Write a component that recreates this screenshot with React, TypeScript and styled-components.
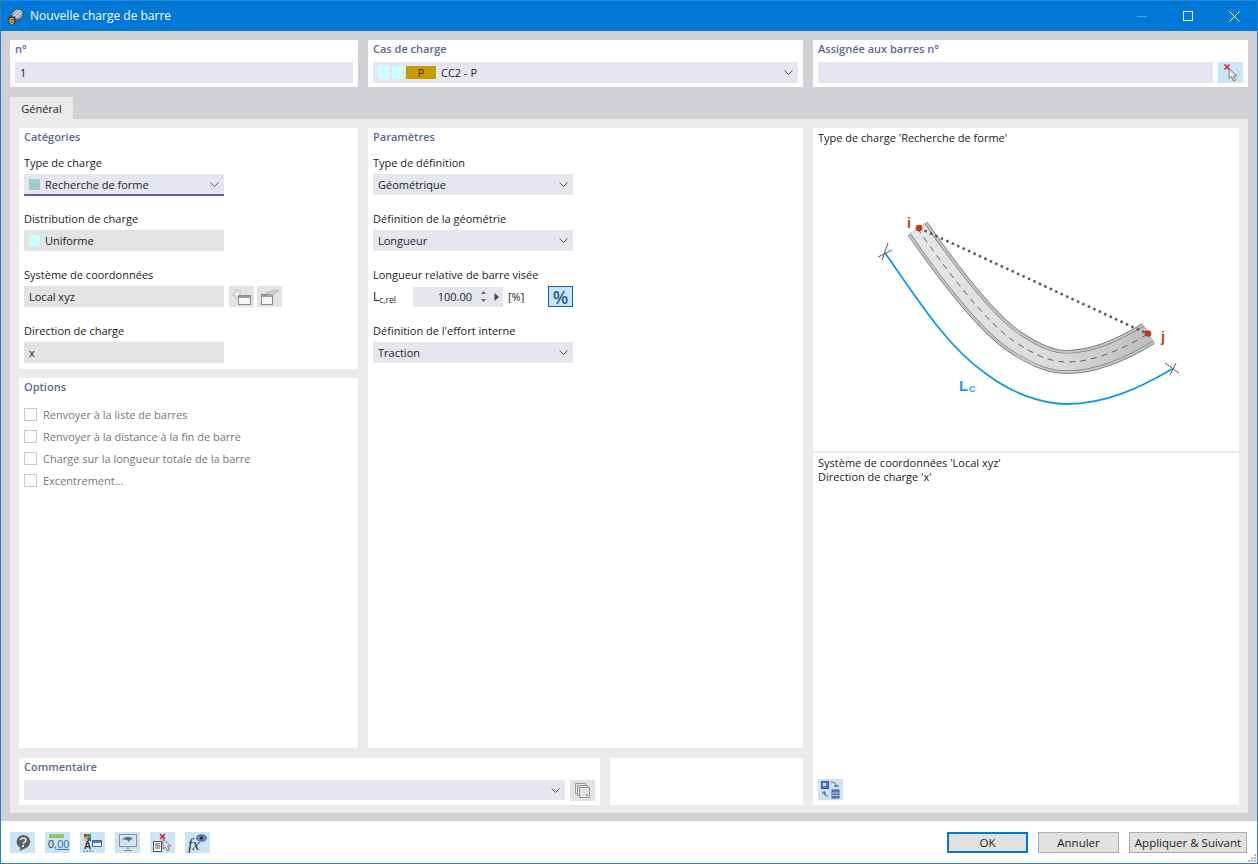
import React from "react";
import styled, { createGlobalStyle } from "styled-components";

const Global = createGlobalStyle`
  html, body { margin: 0; padding: 0; background: #fff; }
  * { box-sizing: border-box; }
  body { font-family: "Open Sans", "Noto Sans", "Liberation Sans", sans-serif; font-size: 11px; color: #1c1c1c; }
`;

const Win = styled.div`
  width: 1258px; height: 864px; display: flex; flex-direction: column;
  border: 1px solid #2a7dc9; border-top: 0; background: #d1d0d5; overflow: hidden;
`;
const TitleBar = styled.div`
  height: 31px; flex: none; background: #0078d7; color: #fff; display: flex; align-items: center;
  margin: 0 -1px; padding-left: 8px; border-top: 1px solid #2a88dc; font-size: 12px;
`;
const TitleText = styled.span` margin-left: 6px; flex: 1; line-height: 18px; `;
const WinControls = styled.div` display: flex; align-items: center; margin-right: 1px; `;
const WinBtn = styled.div` width: 46px; height: 30px; display: flex; align-items: center; justify-content: center; `;
const Body = styled.div` flex: 1; display: flex; flex-direction: column; padding: 9px 9px 8px; min-height: 0; `;
const TopRow = styled.div` display: grid; grid-template-columns: 348px 435px 435px; gap: 10px; height: 47px; flex: none; `;
const Card = styled.div<{ $area?: string; $low?: boolean }>`
  background: #fff; padding: 0 5px; min-width: 0;
  ${(p) => (p.$area ? `grid-area: ${p.$area};` : "")}
  ${(p) => (p.$low ? "margin-top: 1px;" : "")}
`;
const CardTitle = styled.div`
  height: 18px; line-height: 18px; font-weight: 600; color: #5a6a92;
`;
const TopField = styled.div` display: flex; gap: 5px; margin-top: 4px; `;
const Input = styled.div<{ $w?: number; $off?: boolean; $under?: boolean; $h?: number }>`
  height: ${(p) => p.$h ?? 21}px; ${(p) => (p.$w ? `width: ${p.$w}px;` : "")}
  background: ${(p) => (p.$off ? "#e3e3e3" : "#e6e6f0")}; display: flex; align-items: center; padding: 0 5px;
  flex: ${(p) => (p.$w ? "none" : "1")}; min-width: 0;
  ${(p) => (p.$under ? "box-shadow: 0 1px 0 #62649f, inset 0 -1px 0 #62649f;" : "")}
`;
const FieldText = styled.span<{ $gap?: number }>`
  flex: 1; white-space: nowrap; margin-left: ${(p) => p.$gap ?? 0}px;
`;
const Swatch = styled.span<{ $c: string; $w?: number; $h?: number }>`
  display: inline-flex; align-items: center; justify-content: center; flex: none;
  width: ${(p) => p.$w ?? 11}px; height: ${(p) => p.$h ?? 11}px; background: ${(p) => p.$c}; margin-right: 3px; color: #3a2500;
`;
const Chevron = styled.svg` width: 9px; height: 5px; flex: none; `;
const Chev = () => (
  <Chevron viewBox="0 0 9 5"><polyline points="0.5,0.5 4.5,4.5 8.5,0.5" fill="none" stroke="#555" strokeWidth="1" /></Chevron>
);

const TabBar = styled.div` height: 32px; flex: none; display: flex; align-items: flex-end; `;
const Tab = styled.div`
  width: 63px; height: 22px; background: #ebebeb; display: flex; align-items: center; justify-content: center;
`;
const Panel = styled.div`
  flex: 1; background: #ebebeb; padding: 9px 9px 8px; min-height: 0; display: grid;
  grid-template-columns: 339px 232px 193px 426px; grid-template-rows: 241px 370px 48px; column-gap: 10px; row-gap: 9px;
  grid-template-areas: "cat par par fig" "opt par par fig" "com com blank fig";
`;
const Groups = styled.div` display: flex; flex-direction: column; gap: 15px; margin-top: 8px; `;
const Group = styled.div` width: 200px; `;
const WideGroup = styled(Group)` width: 258px; `;
const Label = styled.div` height: 20px; line-height: 18px; white-space: nowrap; `;
const Row = styled.div` display: flex; align-items: center; `;
const CoordRow = styled(Row)` gap: 5px; `;
const IconBtn = styled.div<{ $active?: boolean; $off?: boolean; $tight?: boolean }>`
  width: 25px; height: 21px; flex: none; display: flex; align-items: center; justify-content: center;
  background: ${(p) => (p.$off ? "#e3e3e3" : "#cce4f7")};
  ${(p) => (p.$active ? "border: 1px solid #0068b8;" : "")}
  ${(p) => (p.$tight ? "margin-left: -2px;" : "")}
`;
const CheckList = styled.div` display: flex; flex-direction: column; gap: 9px; margin-top: 12px; `;
const CheckRow = styled.div` display: flex; align-items: center; height: 13px; color: #7b7478; `;
const Box = styled.span` width: 13px; height: 13px; border: 1px solid #c8c8c8; margin-right: 6px; background: #fff; flex: none; `;
const ComRow = styled.div` display: flex; gap: 5px; margin-top: 4px; `;
const FigCard = styled(Card)` display: flex; flex-direction: column; padding: 0; `;
const FigTop = styled.div` height: 325px; flex: none; border-bottom: 2px solid #ebebeb; padding: 3px 5px 0; `;
const FigText = styled.div` line-height: 14px; `;
const Drawing = styled.svg` display: block; width: 330px; height: 220px; margin: 55px 0 0 42px; `;
const FigBottom = styled.div`
  flex: 1; padding: 3px 5px 5px; display: flex; flex-direction: column; justify-content: space-between;
`;
const NumberLabel = styled.span`
  width: 40px; font-size: 12px;
  sub { font-size: 8.5px; vertical-align: -2px; line-height: 0; }
`;
const Spin = styled.div`
  width: 90px; height: 20px; background: #e6e6f0; display: flex; align-items: center; justify-content: flex-end;
  padding-right: 4px; gap: 7px;
`;
const SpinValue = styled.span` margin-right: 1px; `;
const Unit = styled.span` margin-left: 5px; width: 40px; `;
const PctBtn = styled(IconBtn)` font-size: 18px; font-weight: 600; color: #2b5d93; `;
const Footer = styled.div`
  height: 42px; flex: none; background: #fff; display: flex; align-items: center; padding: 1px 10px 0 9px; gap: 10px; position: relative;
`;
const Spacer = styled.div` flex: 1; `;
const Btn = styled.div<{ $w: number; $primary?: boolean }>`
  width: ${(p) => p.$w}px; height: 21px; background: #e1e1e1; display: flex; align-items: center; justify-content: center;
  border: ${(p) => (p.$primary ? "2px solid #0078d7" : "1px solid #adadad")}; font-size: 11.5px;
`;
const Grip = styled.svg` position: absolute; right: 0; bottom: 0; width: 11px; height: 11px; `;

const Star = () => (
  <svg width="21" height="17" viewBox="0 0 21 17">
    <path d="M6 1l1.300 3 3.200-.5-2 2.500 1.500 2.500-3-.7L5 10.500 4.500 7.500 1.500 6.500 4 5z" fill="#f2f2f2" stroke="#c2c2c2" />
    <rect x="7.500" y="7.500" width="12" height="9" fill="#f4f4f4" stroke="#8a8a8a" />
    <rect x="8" y="8" width="11" height="2" fill="#9c9c9c" />
  </svg>
);
const Edit = () => (
  <svg width="21" height="17" viewBox="0 0 21 17">
    <rect x="2.500" y="6.500" width="11" height="10" fill="#f4f4f4" stroke="#8a8a8a" />
    <rect x="3" y="7" width="10" height="2" fill="#9c9c9c" />
    <path d="M7 5l8-3 5 .5-5 4-4 .5z" fill="#cfcfcf" stroke="#b0b0b0" strokeWidth=".7" />
  </svg>
);
const Cursor = () => (
  <svg width="19" height="20" viewBox="0 0 19 20">
    <path d="M8 5.500v10l2.500-2 2 4.500 2-1-2-4h3.500z" fill="#e8e8e8" stroke="#7c7c7c" strokeWidth="1" />
    <path d="M3.500 1.500l5 5M8.500 1.500l-5 5" stroke="#e8112d" strokeWidth="1.500" />
  </svg>
);

const Help = () => (
  <svg width="19" height="18" viewBox="0 0 19 18">
    <path d="M10 1a7 6.800 0 0 1 2.500 13.200L6.500 17l1-3.200A7 6.800 0 0 1 10 1z" fill="#5c5c5c" />
    <path d="M7.500 6c.5-2.500 5.500-2.500 5.500 0 0 2-2.500 2-3 4" fill="none" stroke="#cce4f7" strokeWidth="1.700" />
    <rect x="9" y="11" width="2" height="2" fill="#cce4f7" />
  </svg>
);
const Decimals = () => (
  <svg width="25" height="21" viewBox="0 0 25 21">
    <rect x="4" y="2" width="15" height="4" fill="#96cc6e" />
    <path d="M6 4v2M9 4v2M12 4v2M15 4v2" stroke="#6fa84a" />
    <text x="3" y="16" fontSize="11" fontFamily="Liberation Sans" fill="#333">0,<tspan fill="#2f6fd0">00</tspan></text>
    <rect x="12" y="17" width="12" height="1" fill="#2f6fd0" />
  </svg>
);
const Colors = () => (
  <svg width="25" height="21" viewBox="0 0 25 21">
    <rect x="4" y="2" width="3.500" height="3.500" fill="#d93025" /><rect x="7.500" y="2" width="3.500" height="3.500" fill="#2e9e3e" />
    <rect x="4" y="5.500" width="3.500" height="3.500" fill="#e8c020" /><rect x="7.500" y="5.500" width="3.500" height="3.500" fill="#2a5fc4" />
    <text x="4" y="17" fontSize="10" fontFamily="Liberation Sans" fontWeight="700" fill="#333">A</text>
    <path d="M3 19h10" stroke="#666" strokeDasharray="2 1" />
    <rect x="12.500" y="8.500" width="9" height="6" fill="#f6f6f6" stroke="#666" />
    <rect x="13" y="9" width="8" height="2" fill="#4a78c8" />
  </svg>
);
const Monitor = () => (
  <svg width="20" height="19" viewBox="0 0 20 19">
    <rect x="1.500" y="1.500" width="17" height="12" fill="#d7e2ec" stroke="#8e8e8e" />
    <path d="M4 7c3-4 8-4 11-1-2 0-3 1-4 3-1-2-4-3-7-2z" fill="#3f7a99" />
    <path d="M10 14v3M6 17.500h8" stroke="#8e8e8e" />
  </svg>
);
const DocCursor = () => (
  <svg width="22" height="20" viewBox="0 0 22 20">
    <rect x="1.500" y="8.500" width="8" height="10" fill="#fff" stroke="#555" />
    <path d="M3 11h5M3 13h5M3 15h5" stroke="#555" />
    <path d="M11 6v10l2.500-2 2 4 2-1-2-4h3.500z" fill="#e8e8e8" stroke="#777" />
    <path d="M8 1l5 5M13 1l-5 5" stroke="#e8112d" strokeWidth="1.500" />
  </svg>
);
const FxEye = () => (
  <svg width="21" height="20" viewBox="0 0 21 20">
    <text x="1" y="17" fontSize="16" fontStyle="italic" fontFamily="Liberation Serif" fill="#333">fx</text>
    <ellipse cx="14.500" cy="5" rx="5" ry="3.300" fill="#6f86c8" stroke="#444" strokeWidth=".7" />
    <circle cx="14.500" cy="5" r="1.700" fill="#20305c" />
  </svg>
);
const Copy = () => (
  <svg width="17" height="17" viewBox="0 0 17 17" fill="#e3e3e3" stroke="#999">
    <rect x="1.500" y="1.500" width="10" height="10" />
    <rect x="3.500" y="3.500" width="10" height="10" />
    <rect x="5.500" y="5.500" width="10" height="10" />
    <rect x="12" y="12" width="2" height="2" fill="#999" stroke="none" />
  </svg>
);
const Swap = () => (
  <svg width="21" height="20" viewBox="0 0 21 20">
    <rect x="1.500" y="1.500" width="7" height="7" fill="#4a7be0" stroke="#2a5ab8" />
    <rect x="3" y="3" width="3" height="3" fill="#dce8fa" />
    <path d="M11 2c3 0 5 1 5 5M14 6h5M4 11c0 3 1 5 4 5M2 13h4" fill="none" stroke="#555" />
    <rect x="12" y="10" width="7" height="8" fill="#5f7fb0" stroke="#40608f" />
    <path d="M12 13h7M12 15.500h7" stroke="#a8c0e0" />
  </svg>
);

const AppIcon = () => (
  <svg width="16" height="16" viewBox="0 0 16 16">
    <ellipse cx="9.500" cy="6.500" rx="6" ry="5" fill="#a9a9b4" stroke="#3c3c46" strokeWidth=".8" transform="rotate(-35 9.500 6.500)" />
    <path d="M5 9l7-7M7 10.500l7-7M4 6.500l5-5" stroke="#eceef4" strokeWidth=".9" />
    <rect x="0.500" y="8.500" width="7" height="7.500" fill="#3c3c46" rx="1" />
    <text x="1" y="15.500" fontSize="9" fontWeight="700" fontFamily="Liberation Sans" fill="#f0b90f">6</text>
  </svg>
);

const beam = "M917.500 228.500 C 945 268, 985 322, 1015 342 C 1035 355, 1050 362, 1067 362 C 1095 362, 1125 348, 1148.500 333.500";
const Diagram = () => (
  <Drawing viewBox="860 200 330 220">
    <defs>
      <linearGradient id="web" gradientUnits="userSpaceOnUse" x1="917" y1="0" x2="1150" y2="0">
        <stop offset="0" stopColor="#e6e6e6" /><stop offset=".6" stopColor="#dadada" /><stop offset="1" stopColor="#bdbdbd" />
      </linearGradient>
    </defs>
    <path d={beam} fill="none" stroke="#767676" strokeWidth="24" />
    <path d={beam} fill="none" stroke="#c6c6c6" strokeWidth="22.500" />
    <path d={beam} fill="none" stroke="#6c6c6c" strokeWidth="18" />
    <path d={beam} fill="none" stroke="url(#web)" strokeWidth="17" />
    <path d={beam} fill="none" stroke="#5f5f68" strokeWidth="1" strokeDasharray="6 5" />
    <path d="M919 228 L1148 334" stroke="#55556a" strokeWidth="2.500" strokeDasharray="2.500 3.500" />
    <circle cx="919" cy="228" r="3.300" fill="#c83a0a" />
    <circle cx="1148" cy="333.500" r="3.300" fill="#c83a0a" />
    <text x="907" y="228" fontSize="14" fontWeight="700" fontFamily="Liberation Sans" fill="#c83a0a">i</text>
    <text x="1161" y="342" fontSize="14" fontWeight="700" fontFamily="Liberation Sans" fill="#c83a0a">j</text>
    <path d="M885 253 C 915 295, 945 345, 985 373 C 1010 392, 1040 404, 1067 404 C 1105 404, 1140 388, 1172 369" fill="none" stroke="#0e9bdc" strokeWidth="1.800" />
    <path d="M878 257l14-7M882 260l6-17M1165 363l14 10M1170 375l6-12" stroke="#55556a" strokeWidth="1" />
    <text x="959" y="391" fontSize="15" fontWeight="700" fontFamily="Liberation Sans" fill="#1c9fe0">L</text>
    <text x="969" y="392" fontSize="9" fontWeight="700" fontFamily="Liberation Sans" fill="#1c9fe0">C</text>
  </Drawing>
);

export default function App() {
  return (
    <Win>
      <Global />
      <TitleBar>
        <AppIcon />
        <TitleText>Nouvelle charge de barre</TitleText>
        <WinControls>
          <WinBtn><svg width="10" height="10"><path d="M0 5.500h10" stroke="#5aa5e6" /></svg></WinBtn>
          <WinBtn><svg width="10" height="10"><rect x=".5" y=".5" width="9" height="9" fill="none" stroke="#fff" /></svg></WinBtn>
          <WinBtn><svg width="11" height="11"><path d="M.5.5l10 10M10.500.5l-10 10" stroke="#fff" /></svg></WinBtn>
        </WinControls>
      </TitleBar>
      <Body>
        <TopRow>
          <Card>
            <CardTitle>n°</CardTitle>
            <TopField><Input><FieldText>1</FieldText></Input></TopField>
          </Card>
          <Card>
            <CardTitle>Cas de charge</CardTitle>
            <TopField>
              <Input>
                <Swatch $c="#ccffff" $h={13} /><Swatch $c="#ccffff" $h={13} /><Swatch $c="#c69c00" $w={30} $h={13}>P</Swatch>
                <FieldText $gap={2}>CC2 - P</FieldText><Chev />
              </Input>
            </TopField>
          </Card>
          <Card>
            <CardTitle>Assignée aux barres n°</CardTitle>
            <TopField><Input /><IconBtn><Cursor /></IconBtn></TopField>
          </Card>
        </TopRow>
        <TabBar><Tab>Général</Tab></TabBar>
        <Panel>
          <Card $area="cat">
            <CardTitle>Catégories</CardTitle>
            <Groups>
              <Group><Label>Type de charge</Label><Input $under><Swatch $c="#9ccccc" /><FieldText $gap={2}>Recherche de forme</FieldText><Chev /></Input></Group>
              <Group><Label>Distribution de charge</Label><Input $off><Swatch $c="#ccffff" /><FieldText $gap={2}>Uniforme</FieldText></Input></Group>
              <WideGroup>
                <Label>Système de coordonnées</Label>
                <CoordRow>
                  <Input $off $w={200}><FieldText>Local xyz</FieldText></Input>
                  <IconBtn $off><Star /></IconBtn>
                  <IconBtn $off $tight><Edit /></IconBtn>
                </CoordRow>
              </WideGroup>
              <Group><Label>Direction de charge</Label><Input $off><FieldText>x</FieldText></Input></Group>
            </Groups>
          </Card>
          <Card $area="opt">
            <CardTitle>Options</CardTitle>
            <CheckList>
              <CheckRow><Box />Renvoyer à la liste de barres</CheckRow>
              <CheckRow><Box />Renvoyer à la distance à la fin de barre</CheckRow>
              <CheckRow><Box />Charge sur la longueur totale de la barre</CheckRow>
              <CheckRow><Box />Excentrement...</CheckRow>
            </CheckList>
          </Card>
          <Card $area="par">
            <CardTitle>Paramètres</CardTitle>
            <Groups>
              <Group><Label>Type de définition</Label><Input><FieldText>Géométrique</FieldText><Chev /></Input></Group>
              <Group><Label>Définition de la géométrie</Label><Input><FieldText>Longueur</FieldText><Chev /></Input></Group>
              <Group>
                <Label>Longueur relative de barre visée</Label>
                <Row>
                  <NumberLabel>L<sub>c,rel</sub></NumberLabel>
                  <Spin>
                    <SpinValue>100.00</SpinValue>
                    <svg width="7" height="13" viewBox="0 0 7 13"><path d="M3.500 1L6 4H1zM3.500 12L1 9h5z" fill="#666" /></svg>
                    <svg width="5" height="8" viewBox="0 0 5 8"><path d="M.5 0L5 4 .5 8z" fill="#444" /></svg>
                  </Spin>
                  <Unit>[%]</Unit>
                  <PctBtn $active>%</PctBtn>
                </Row>
              </Group>
              <Group><Label>Définition de l'effort interne</Label><Input><FieldText>Traction</FieldText><Chev /></Input></Group>
            </Groups>
          </Card>
          <Card $area="com" $low>
            <CardTitle>Commentaire</CardTitle>
            <ComRow><Input $h={20}><FieldText /><Chev /></Input><IconBtn $off><Copy /></IconBtn></ComRow>
          </Card>
          <Card $area="blank" $low />
          <FigCard $area="fig">
            <FigTop>
              <FigText>Type de charge 'Recherche de forme'</FigText>
              <Diagram />
            </FigTop>
            <FigBottom>
              <FigText>Système de coordonnées 'Local xyz'<br />Direction de charge 'x'</FigText>
              <IconBtn><Swap /></IconBtn>
            </FigBottom>
          </FigCard>
        </Panel>
      </Body>
      <Footer>
        <IconBtn><Help /></IconBtn>
        <IconBtn><Decimals /></IconBtn>
        <IconBtn><Colors /></IconBtn>
        <IconBtn><Monitor /></IconBtn>
        <IconBtn><DocCursor /></IconBtn>
        <IconBtn><FxEye /></IconBtn>
        <Spacer />
        <Btn $w={81} $primary>OK</Btn>
        <Btn $w={81}>Annuler</Btn>
        <Btn $w={118}>Appliquer &amp; Suivant</Btn>
        <Grip viewBox="0 0 11 11"><path d="M8 2h2v2H8zM5 5h2v2H5zM8 5h2v2H8zM2 8h2v2H2zM5 8h2v2H5zM8 8h2v2H8z" fill="#b8b8b8" /></Grip>
      </Footer>
    </Win>
  );
}
